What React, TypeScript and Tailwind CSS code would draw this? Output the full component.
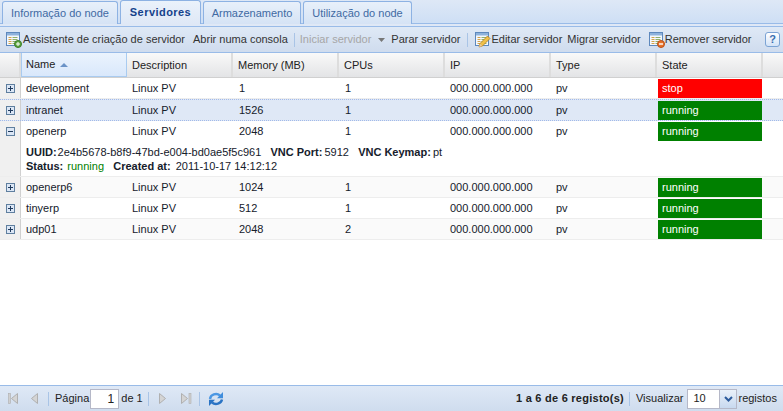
const cols = ["Name", "Description", "Memory (MB)", "CPUs", "IP", "Type", "State"];

const rows = [
  { name: "development", mem: "1", cpu: "1", state: "stop" },
  { name: "intranet", mem: "1526", cpu: "1", state: "running", selected: true },
  { name: "openerp", mem: "2048", cpu: "1", state: "running", expanded: true },
  { name: "openerp6", mem: "1024", cpu: "1", state: "running", alt: true },
  { name: "tinyerp", mem: "512", cpu: "1", state: "running" },
  { name: "udp01", mem: "2048", cpu: "2", state: "running", alt: true },
];

function Expander({ open }: { open?: boolean }) {
  return (
    <svg width="9" height="9" viewBox="0 0 9 9" className="block">
      <rect x="0.5" y="0.5" width="8" height="8" fill="#dbe6f5" stroke="#5f7f9f" />
      <path d={open ? "M2 4.5h5" : "M2 4.5h5M4.5 2v5"} stroke="#1f3a5c" strokeWidth="1" />
    </svg>
  );
}

function FormIcon({ badge }: { badge?: "add" | "edit" | "remove" }) {
  return (
    <svg width="16" height="16" viewBox="0 0 16 16" className="shrink-0 block">
      <rect x="0.5" y="0.5" width="13" height="13" fill="#f4f8fd" stroke="#5d88bd" />
      <rect x="1" y="1" width="12" height="2.5" fill="#8db2dc" />
      <path d="M2.5 5.5h3M2.5 7.5h3M2.5 9.5h3M2.5 11.5h3" stroke="#d4a24a" />
      <path d="M6.5 5.5h5M6.5 7.5h5M6.5 9.5h5M6.5 11.5h5" stroke="#8fb06c" />
      {badge === "add" && (
        <g>
          <circle cx="12" cy="12" r="3.5" fill="#5aa53e" stroke="#3c7d28" />
          <path d="M10 12h4M12 10v4" stroke="#fff" />
        </g>
      )}
      {badge === "remove" && (
        <g>
          <circle cx="12" cy="12" r="3.5" fill="#e8722a" stroke="#b9501a" />
          <path d="M10 12h4" stroke="#fff" strokeWidth="1.4" />
        </g>
      )}
      {badge === "edit" && (
        <g>
          <path d="M5 11.5 12.5 4l2.5 2.5L7.5 14 4 15z" fill="#f0c048" stroke="#b07f22" strokeWidth="0.8" />
          <path d="M4 15l1-3.2 2.3 2.2z" fill="#e8c9a0" />
        </g>
      )}
    </svg>
  );
}

function Sep() {
  return <div className="w-px h-[14px] bg-[#a9c4e6] shrink-0" />;
}

function NavIcon({ dir, bar }: { dir: "l" | "r"; bar?: boolean }) {
  const tri = dir === "l" ? "M10.5 2.5v10l-6-5z" : "M4.5 2.5v10l6-5z";
  const barX = dir === "l" ? 1.5 : 12;
  return (
    <svg width="15" height="15" viewBox="0 0 15 15" className="block shrink-0">
      {bar && <rect x={barX} y="2.5" width="2" height="10" fill="#d0d0d0" stroke="#adadad" strokeWidth="0.6" />}
      <path d={tri} fill="#d4d4d4" stroke="#b0b0b0" />
    </svg>
  );
}

export default function App() {
  const grid = "grid grid-cols-[21px_106px_106px_106px_106px_106px_106px_106px_1fr]";
  return (
    <div
      className="w-[783px] h-[411px] flex flex-col overflow-hidden bg-white text-[11px] text-[#15202b] whitespace-nowrap"
      style={{ fontFamily: '"Liberation Sans", Arial, sans-serif' }}
    >
      {/* Tabs */}
      <div className="h-[24px] shrink-0 flex items-end gap-[2px] pl-[2px] border-b border-[#99bbe8] bg-gradient-to-b from-[#dee8f6] to-[#cedff5]">
        <div className="h-[23px] w-[116px] flex items-center justify-center text-[#416aa3] rounded-t-[3px] border border-b-0 border-[#8db2e3] bg-gradient-to-b from-[#e8f0fa] to-[#d5e3f5] -mb-px">
          Informação do node
        </div>
        <div className="h-[24px] w-[81px] flex items-center justify-center font-bold tracking-[0.45px] text-[#15428b] rounded-t-[3px] border border-b-0 border-[#8db2e3] bg-gradient-to-b from-[#eaf2fb] to-[#dfe8f6] -mb-px relative z-10">
          Servidores
        </div>
        <div className="h-[23px] w-[98px] flex items-center justify-center text-[#416aa3] rounded-t-[3px] border border-b-0 border-[#8db2e3] bg-gradient-to-b from-[#e8f0fa] to-[#d5e3f5] -mb-px">
          Armazenamento
        </div>
        <div className="h-[23px] w-[109px] flex items-center justify-center text-[#416aa3] rounded-t-[3px] border border-b-0 border-[#8db2e3] bg-gradient-to-b from-[#e8f0fa] to-[#d5e3f5] -mb-px">
          Utilização do node
        </div>
      </div>
      <div className="h-[3px] shrink-0 bg-[#dfe8f6] border-b border-[#99bbe8]" />

      {/* Toolbar */}
      <div className="h-[26px] shrink-0 flex items-center pl-[6px] pr-[3px] border-b border-[#99bbe8] bg-gradient-to-b from-[#dfe9f6] to-[#cfdcee] text-[#333]">
        <FormIcon badge="add" />
        <span className="ml-px">Assistente de criação de servidor</span>
        <span className="ml-[8px]">Abrir numa consola</span>
        <div className="ml-[6px]"><Sep /></div>
        <span className="ml-[5px] text-[#a6a6a6]">Iniciar servidor</span>
        <svg width="7" height="4" viewBox="0 0 7 4" className="ml-[7px] mt-px">
          <path d="M0 0h7L3.5 4z" fill="#777" />
        </svg>
        <span className="ml-[6px]">Parar servidor</span>
        <div className="ml-[7px] mr-[7px]"><Sep /></div>
        <FormIcon badge="edit" />
        <span>Editar servidor</span>
        <span className="ml-[5px]">Migrar servidor</span>
        <span className="ml-[8px]"><FormIcon badge="remove" /></span>
        <span>Remover servidor</span>
        <div className="ml-auto w-[15px] h-[15px] rounded-[3px] border border-[#7ba3d4] bg-gradient-to-b from-white to-[#d3e3f7] flex items-center justify-center font-bold text-[11px] text-[#3a6fb0] leading-none">
          ?
        </div>
      </div>

      {/* Header */}
      <div className={`${grid} h-[25px] shrink-0 bg-gradient-to-b from-[#f9f9f9] to-[#e3e4e6] border-b border-[#d0d0d0] text-[#222]`}>
        <div className="border-r-2 border-[#dddddd]" />
        {cols.map((c, i) => (
          <div
            key={c}
            className={
              i === 0
                ? "flex items-center pl-[4px] border-r border-b border-l border-[#a9cbf0] bg-gradient-to-b from-[#ebf3fd] to-[#d9e8fb]"
                : "flex items-center pl-[5px] border-r-2 border-[#dddddd]"
            }
          >
            {c}
            {i === 0 && (
              <svg width="8" height="4" viewBox="0 0 8 4" className="ml-[5px] mt-px">
                <path d="M4 0l4 4H0z" fill="#6b93c7" />
              </svg>
            )}
          </div>
        ))}
        <div />
      </div>

      {/* Rows */}
      <div className="flex-1 min-h-0">
        {rows.map((r) => (
          <div
            key={r.name}
            className={
              r.selected
                ? "border-t border-b border-dotted border-[#a3bae9] bg-[#dfe8f6]"
                : r.alt
                  ? "border-b border-[#ededed] bg-[#fafafa]"
                  : "border-b border-[#ededed] bg-white"
            }
          >
            <div className={`${grid} h-[20px]`}>
              <div className="pl-[6px] pt-[6px] bg-[#f0f0f0] border-r border-[#d0d0d0]">
                <Expander open={r.expanded} />
              </div>
              <div className="pl-[5px] pt-px flex items-center">{r.name}</div>
              <div className="pl-[5px] pt-px flex items-center">Linux PV</div>
              <div className="pl-[6px] pt-px flex items-center">{r.mem}</div>
              <div className="pl-[6px] pt-px flex items-center">{r.cpu}</div>
              <div className="pl-[5px] pt-px flex items-center">000.000.000.000</div>
              <div className="pl-[5px] pt-px flex items-center">pv</div>
              <div className="pl-px pr-px flex items-stretch pt-px">
                <div
                  className={`w-full flex items-center pl-[4px] text-white ${r.state === "stop" ? "bg-[#ff0000]" : "bg-[#008000]"}`}
                >
                  {r.state}
                </div>
              </div>
              <div />
            </div>
            {r.expanded && (
              <div className="flex">
                <div className="w-[21px] h-[35px] bg-[#f0f0f0] border-r border-[#d0d0d0] shrink-0" />
                <div className="pl-[5px] pt-[4px] leading-[14px]">
                  <div>
                    <b className="inline-block -mr-[2px]">UUID:</b> 2e4b5678-b8f9-47bd-e004-bd0ae5f5c961 &nbsp; <b className="inline-block -mr-px">VNC Port:</b> 5912 &nbsp; <b className="inline-block -mr-px">VNC Keymap:</b> pt
                  </div>
                  <div>
                    <b>Status:</b> <span className="ml-px text-[#008000]">running</span> &nbsp; <b className="inline-block mr-[2px]">Created at:</b> 2011-10-17 14:12:12
                  </div>
                </div>
              </div>
            )}
          </div>
        ))}
      </div>

      {/* Pager */}
      <div className="h-[26px] shrink-0 flex items-center pl-[7px] pr-[6px] border-t border-[#99bbe8] bg-gradient-to-b from-[#dfe9f6] to-[#cfdcee] text-[#222]">
        <NavIcon dir="l" bar />
        <span className="ml-[5px]"><NavIcon dir="l" /></span>
        <div className="ml-[6px]"><Sep /></div>
        <span className="ml-[6px]">Página</span>
        <div className="ml-px w-[29px] h-[20px] border border-[#b5b8c8] bg-white flex items-center justify-end pr-[4px] text-[12px]">1</div>
        <span className="ml-[2px]">de 1</span>
        <div className="ml-[5px]"><Sep /></div>
        <span className="ml-[6px]"><NavIcon dir="r" /></span>
        <span className="ml-[7px]"><NavIcon dir="r" bar /></span>
        <div className="ml-[7px]"><Sep /></div>
        <svg width="16" height="16" viewBox="0 0 16 16" className="ml-[8px]">
          <path d="M2 8a6 5.5 0 0 1 10-3.5" fill="none" stroke="#4b97e3" strokeWidth="2.4" />
          <path d="M15 1v6.2H9z" fill="#3f8ddc" />
          <path d="M14 8.5a6 5.5 0 0 1-10 3" fill="none" stroke="#2a73c4" strokeWidth="2.4" />
          <path d="M1 15V8.8h6z" fill="#2a73c4" />
        </svg>
        <span className="ml-auto font-bold tracking-[0.25px]">1 a 6 de 6 registo(s)</span>
        <div className="ml-[5px]"><Sep /></div>
        <span className="ml-[6px]">Visualizar</span>
        <div className="ml-[4px] w-[50px] h-[20px] flex border border-[#b5b8c8] bg-white">
          <span className="flex-1 flex items-center pl-[5px]">10</span>
          <div className="w-[17px] flex items-center justify-center bg-gradient-to-b from-[#eaf1fa] to-[#c8d9ef] border-l border-[#b5b8c8]">
            <svg width="9" height="6" viewBox="0 0 9 6">
              <path d="M1 1l3.5 3.5L8 1" fill="none" stroke="#2d5b9c" strokeWidth="2" />
            </svg>
          </div>
        </div>
        <span className="ml-[1px]">registos</span>
      </div>
    </div>
  );
}
